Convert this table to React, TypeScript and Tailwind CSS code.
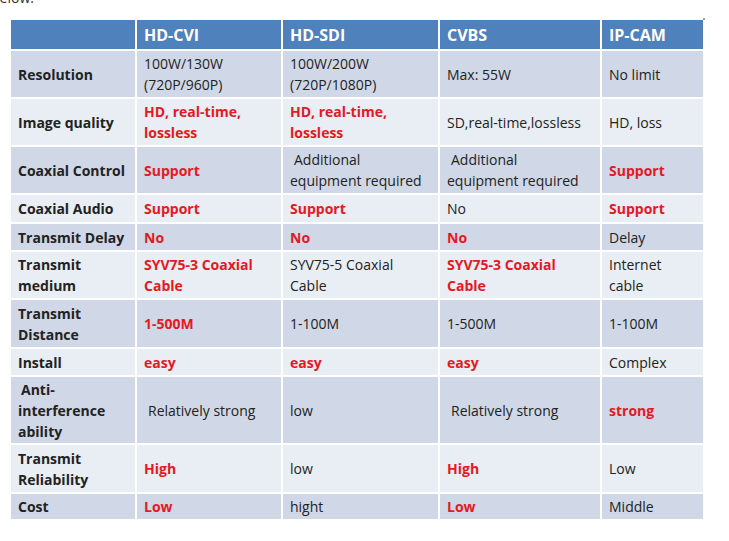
type Cell = { text: string; red?: boolean; indent?: boolean };

const header = ['', 'HD-CVI', 'HD-SDI', 'CVBS', 'IP-CAM'];

const rows: { label: string; labelIndent?: boolean; h: string; cells: Cell[] }[] = [
  {
    label: 'Resolution',
    h: 'h-[46px]',
    cells: [
      { text: '100W/130W\n(720P/960P)' },
      { text: '100W/200W\n(720P/1080P)' },
      { text: 'Max: 55W' },
      { text: 'No limit' },
    ],
  },
  {
    label: 'Image quality',
    h: 'h-[46px]',
    cells: [
      { text: 'HD, real-time,\nlossless', red: true },
      { text: 'HD, real-time,\nlossless', red: true },
      { text: 'SD,real-time,lossless' },
      { text: 'HD, loss' },
    ],
  },
  {
    label: 'Coaxial Control',
    h: 'h-[46px]',
    cells: [
      { text: 'Support', red: true },
      { text: 'Additional\nequipment required', indent: true },
      { text: 'Additional\nequipment required', indent: true },
      { text: 'Support', red: true },
    ],
  },
  {
    label: 'Coaxial Audio',
    h: 'h-[27px]',
    cells: [
      { text: 'Support', red: true },
      { text: 'Support', red: true },
      { text: 'No' },
      { text: 'Support', red: true },
    ],
  },
  {
    label: 'Transmit Delay',
    h: 'h-[26px]',
    cells: [
      { text: 'No', red: true },
      { text: 'No', red: true },
      { text: 'No', red: true },
      { text: 'Delay' },
    ],
  },
  {
    label: 'Transmit\nmedium',
    h: 'h-[46px]',
    cells: [
      { text: 'SYV75-3 Coaxial\nCable', red: true },
      { text: 'SYV75-5 Coaxial\nCable' },
      { text: 'SYV75-3 Coaxial\nCable', red: true },
      { text: 'Internet\ncable' },
    ],
  },
  {
    label: 'Transmit\nDistance',
    h: 'h-[47px]',
    cells: [
      { text: '1-500M', red: true },
      { text: '1-100M' },
      { text: '1-500M' },
      { text: '1-100M' },
    ],
  },
  {
    label: 'Install',
    h: 'h-[26px]',
    cells: [
      { text: 'easy', red: true },
      { text: 'easy', red: true },
      { text: 'easy', red: true },
      { text: 'Complex' },
    ],
  },
  {
    label: 'Anti-\ninterference\nability',
    labelIndent: true,
    h: 'h-[66px]',
    cells: [
      { text: 'Relatively strong', indent: true },
      { text: 'low' },
      { text: 'Relatively strong', indent: true },
      { text: 'strong', red: true },
    ],
  },
  {
    label: 'Transmit\nReliability',
    h: 'h-[47px]',
    cells: [
      { text: 'High', red: true },
      { text: 'low' },
      { text: 'High', red: true },
      { text: 'Low' },
    ],
  },
  {
    label: 'Cost',
    h: 'h-[25px]',
    cells: [
      { text: 'Low', red: true },
      { text: 'hight' },
      { text: 'Low', red: true },
      { text: 'Middle' },
    ],
  },
];

const cols = 'grid grid-cols-[124px_144px_155px_160px_101px] gap-x-[2px]';

export default function App() {
  return (
    <div className="w-[729px] h-[541px] bg-white overflow-hidden font-['Open_Sans','Liberation_Sans',sans-serif] text-[#222]">
      <p className="-mt-[10px] -ml-[9px] h-[30px] text-[14px] leading-[16px] text-[#333]">below.</p>

      <div className="relative ml-[11px] w-[692px] flex flex-col gap-y-[2px]">
        {/* stray dot next to the table corner */}
        <span className="absolute -right-[2px] -top-[2px] w-[2px] h-[2px] bg-[#9aa3ad]" />

        {/* header */}
        <div className={`${cols} h-[29px]`}>
          {header.map((h, i) => (
            <div key={i} className="bg-[#4f81bd] flex items-center px-[7px] text-white font-bold text-[16px]">
              {h}
            </div>
          ))}
        </div>

        {rows.map((row, ri) => {
          const bg = ri % 2 === 0 ? 'bg-[#d0d8e8]' : 'bg-[#e9edf4]';
          return (
            <div key={ri} className={`${cols} ${row.h}`}>
              <div
                className={`${bg} flex items-center font-bold text-[14px] leading-[21px] whitespace-pre-line ${
                  row.labelIndent ? 'pl-[10px]' : 'pl-[7px]'
                }`}
              >
                <span className={row.labelIndent ? '-ml-[3px]' : ''}>
                  {row.labelIndent ? (
                    <>
                      <span className="pl-[3px]">{row.label.split('\n')[0]}</span>
                      {'\n' + row.label.split('\n').slice(1).join('\n')}
                    </>
                  ) : (
                    row.label
                  )}
                </span>
              </div>
              {row.cells.map((c, ci) => (
                <div
                  key={ci}
                  className={`${bg} flex items-center text-[14px] leading-[21px] whitespace-pre-line ${
                    c.indent ? 'pl-[11px]' : 'pl-[7px]'
                  } ${c.red ? 'text-[#e31a22] font-bold' : ''}`}
                >
                  {c.indent && c.text.includes('\n') ? (
                    <span className="-ml-[4px]">
                      <span className="pl-[4px]">{c.text.split('\n')[0]}</span>
                      {'\n'}
                      {c.text.split('\n')[1]}
                    </span>
                  ) : (
                    c.text
                  )}
                </div>
              ))}
            </div>
          );
        })}
      </div>
    </div>
  );
}
